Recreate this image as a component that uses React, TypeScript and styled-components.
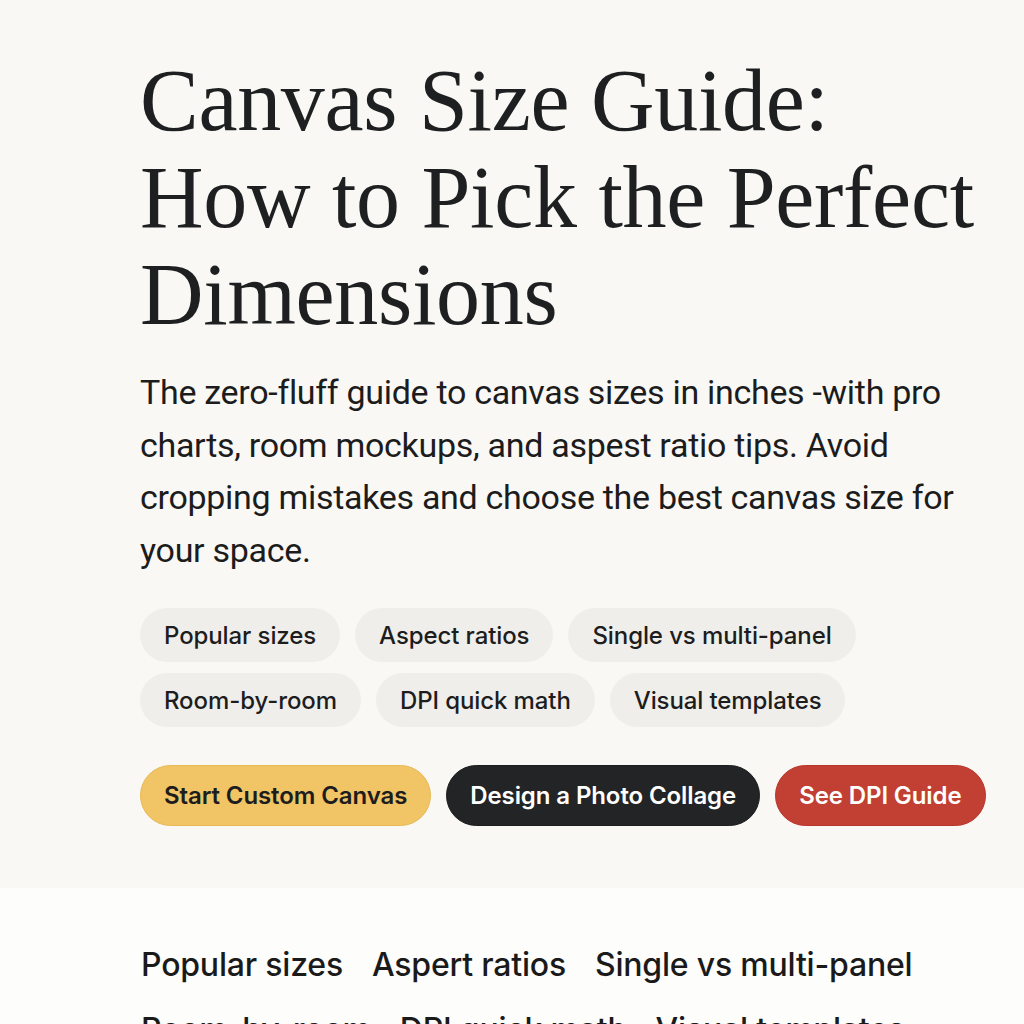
import styled, { createGlobalStyle } from "styled-components";

const GlobalStyle = createGlobalStyle`
  html, body {
    margin: 0;
    padding: 0;
    background: #fdfdfb;
  }
  body {
    font-family: "Inter", "Roboto", sans-serif;
    color: #1f2021;
  }
`

const Hero = styled.section`
  background: #f9f8f5;
  padding: 52px 40px 62px 140px;
`

const Title = styled.h1`
  margin: 0 0 23px;
  font-family: "Liberation Serif", "Times New Roman", serif;
  font-weight: 400;
  font-size: 88px;
  line-height: 97px;
  letter-spacing: -0.3px;
  color: #1e1f20;
`

const Lead = styled.p`
  margin: 0 0 32px;
  max-width: 822px;
  font-family: "Roboto", sans-serif;
  font-size: 34px;
  line-height: 52.5px;
  letter-spacing: -0.3px;
  color: #1c1c1c;
`

const Chips = styled.div`
  display: flex;
  flex-wrap: wrap;
  gap: 11px 15px;
  max-width: 740px;
  margin-bottom: 38px;
`

const Chip = styled.span`
  display: inline-flex;
  align-items: center;
  height: 54px;
  padding: 0 24px;
  border-radius: 27px;
  background: #efeeeb;
  font-family: "Inter", sans-serif;
  font-size: 24px;
  font-weight: 500;
  letter-spacing: -0.1px;
  white-space: nowrap;
  color: #1d1d1d;
`

const Actions = styled.div`
  display: flex;
  gap: 15px;
`

const Button = styled.button<{ $tone: "yellow" | "dark" | "red" }>`
  flex-shrink: 0;
  height: 61px;
  padding: 0 23px;
  border-radius: 31px;
  border: 1px solid ${p => p.$tone === "yellow" ? "#e9b955" : p.$tone === "dark" ? "#1b1c1d" : "#b8362b"};
  background: ${p => p.$tone === "yellow" ? "#f1c465" : p.$tone === "dark" ? "#232425" : "#c13f33"};
  color: ${p => p.$tone === "yellow" ? "#1d1d1d" : "#ffffff"};
  font-family: "Inter", sans-serif;
  font-size: 24px;
  font-weight: 600;
  letter-spacing: -0.1px;
  white-space: nowrap;
  cursor: pointer;
`

const TopicSection = styled.section`
  background: #fdfdfb;
  padding: 51px 40px 0 141px;
`

const TopicRow = styled.nav`
  display: flex;
  flex-wrap: wrap;
  gap: 13px 29px;
  max-width: 800px;
`

const Topic = styled.a`
  font-family: "Inter", sans-serif;
  font-size: 32px;
  font-weight: 500;
  letter-spacing: -0.2px;
  line-height: 52px;
  white-space: nowrap;
  color: #1a1a1a;
  text-decoration: none;
`

const chips = [
  "Popular sizes",
  "Aspect ratios",
  "Single vs multi-panel",
  "Room-by-room",
  "DPI quick math",
  "Visual templates",
]

const topics = [
  "Popular sizes",
  "Aspert ratios",
  "Single vs multi-panel",
  "Room-by-room",
  "DPI quick math",
  "Visual templates",
]

export default function App() {
  return (
    <>
      <GlobalStyle />
      <Hero>
        <Title>
          Canvas Size Guide:<br />
          How to Pick the Perfect Dimensions
        </Title>
        <Lead>
          The zero-fluff guide to canvas sizes in inches -with pro charts, room
          mockups, and aspest ratio tips. Avoid cropping mistakes and choose the
          best canvas size for your space.
        </Lead>
        <Chips>
          {chips.map(c => <Chip key={c}>{c}</Chip>)}
        </Chips>
        <Actions>
          <Button $tone="yellow">Start Custom Canvas</Button>
          <Button $tone="dark">Design a Photo Collage</Button>
          <Button $tone="red">See DPI Guide</Button>
        </Actions>
      </Hero>
      <TopicSection>
        <TopicRow>
          {topics.map(t => <Topic key={t} href="#">{t}</Topic>)}
        </TopicRow>
      </TopicSection>
    </>
  );
}
